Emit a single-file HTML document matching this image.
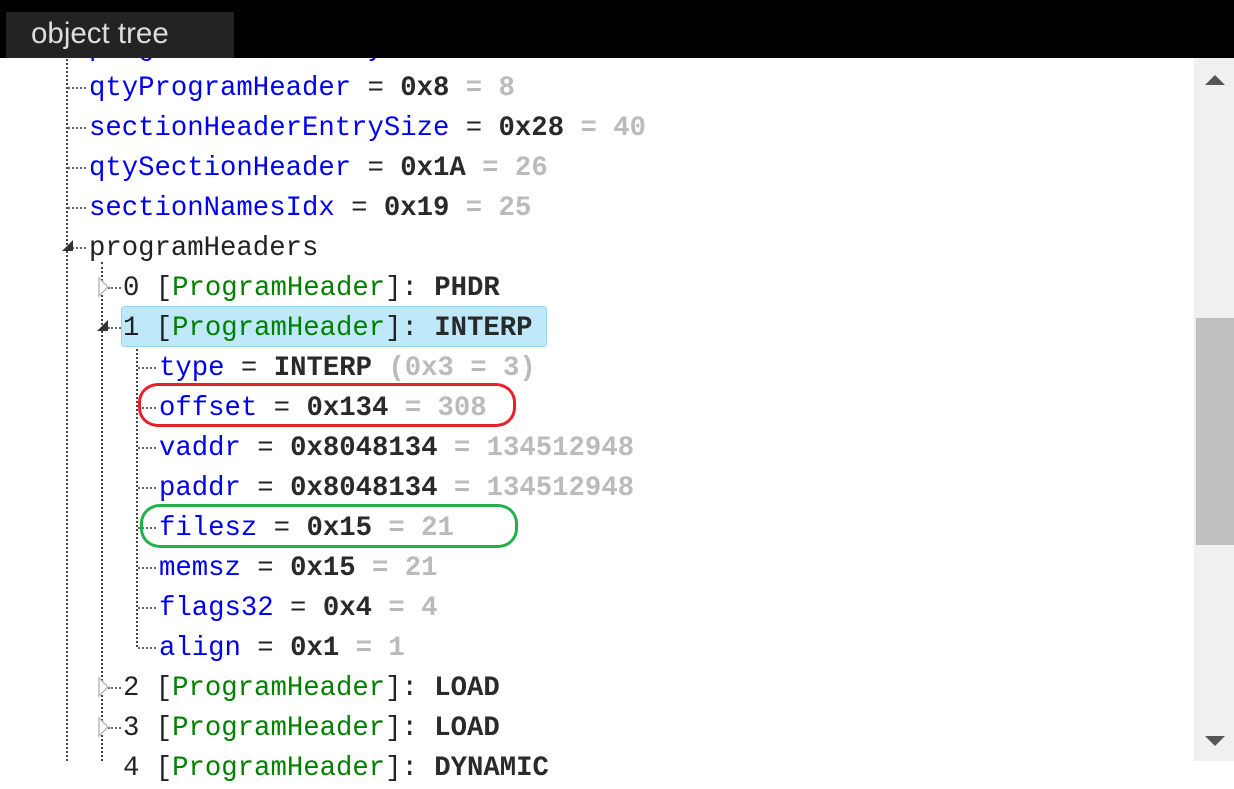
<!DOCTYPE html>
<html><head><meta charset="utf-8"><style>
body{margin:0;width:1234px;height:761px;overflow:hidden;background:#fff;position:relative;font-family:"Liberation Mono",monospace;}
.r{position:absolute;height:40px;line-height:40px;font-size:27.3px;white-space:pre;color:#222;margin-top:2px}
.k{color:#0000f0}.b{font-weight:bold;color:#2a2a2a}.g{color:#bbb;font-weight:bold}.gr{color:#008000}
.v{position:absolute;width:0;border-left:2px dotted #444;}
.h{position:absolute;height:0;border-top:2px dotted #666;}
</style></head><body>
<div class="v" style="left:66px;top:40px;height:721px"></div>
<div class="v" style="left:101px;top:262px;height:499px"></div>
<div class="v" style="left:136px;top:342px;height:305px"></div>
<div class="h" style="left:68px;top:87px;width:18px"></div>
<div class="h" style="left:68px;top:127px;width:18px"></div>
<div class="h" style="left:68px;top:167px;width:18px"></div>
<div class="h" style="left:68px;top:207px;width:18px"></div>
<div class="h" style="left:72px;top:247px;width:14px"></div>
<div class="h" style="left:108px;top:287px;width:13px"></div>
<div class="h" style="left:108px;top:327px;width:13px"></div>
<div class="h" style="left:138px;top:367px;width:18px"></div>
<div class="h" style="left:138px;top:407px;width:18px"></div>
<div class="h" style="left:138px;top:447px;width:18px"></div>
<div class="h" style="left:138px;top:487px;width:18px"></div>
<div class="h" style="left:138px;top:527px;width:18px"></div>
<div class="h" style="left:138px;top:567px;width:18px"></div>
<div class="h" style="left:138px;top:607px;width:18px"></div>
<div class="h" style="left:138px;top:647px;width:18px"></div>
<div class="h" style="left:108px;top:687px;width:13px"></div>
<div class="h" style="left:108px;top:727px;width:13px"></div>
<svg style="position:absolute;left:58px;top:236px" width="20" height="20"><polygon points="4,15 15,15 15,4" fill="#333"/></svg>
<svg style="position:absolute;left:93px;top:316px" width="20" height="20"><polygon points="4,15 15,15 15,4" fill="#333"/></svg>
<svg style="position:absolute;left:96px;top:276px" width="20" height="22"><polygon points="3,2 3,20 12,11" fill="#fff" stroke="#bbb" stroke-width="1.5"/></svg>
<svg style="position:absolute;left:96px;top:676px" width="20" height="22"><polygon points="3,2 3,20 12,11" fill="#fff" stroke="#bbb" stroke-width="1.5"/></svg>
<svg style="position:absolute;left:96px;top:716px" width="20" height="22"><polygon points="3,2 3,20 12,11" fill="#fff" stroke="#bbb" stroke-width="1.5"/></svg>
<div style="position:absolute;left:121px;top:306px;width:424px;height:39px;background:#bfe8fb;border:1px solid #9fd4f0;border-radius:3px"></div>
<div class="r" style="left:89px;top:27px"><span class="k">programHeaderEntrySize</span> = <span class="b">0x20</span> <span class="g">= 32</span></div>
<div class="r" style="left:89px;top:67px"><span class="k">qtyProgramHeader</span> = <span class="b">0x8</span> <span class="g">= 8</span></div>
<div class="r" style="left:89px;top:107px"><span class="k">sectionHeaderEntrySize</span> = <span class="b">0x28</span> <span class="g">= 40</span></div>
<div class="r" style="left:89px;top:147px"><span class="k">qtySectionHeader</span> = <span class="b">0x1A</span> <span class="g">= 26</span></div>
<div class="r" style="left:89px;top:187px"><span class="k">sectionNamesIdx</span> = <span class="b">0x19</span> <span class="g">= 25</span></div>
<div class="r" style="left:89px;top:227px">programHeaders</div>
<div class="r" style="left:123px;top:267px">0 [<span class="gr">ProgramHeader</span>]: <span class="b">PHDR</span></div>
<div class="r" style="left:123px;top:307px">1 [<span class="gr">ProgramHeader</span>]: <span class="b">INTERP</span></div>
<div class="r" style="left:159px;top:347px"><span class="k">type</span> = <span class="b">INTERP</span> <span class="g">(0x3 = 3)</span></div>
<div class="r" style="left:159px;top:387px"><span class="k">offset</span> = <span class="b">0x134</span> <span class="g">= 308</span></div>
<div class="r" style="left:159px;top:427px"><span class="k">vaddr</span> = <span class="b">0x8048134</span> <span class="g">= 134512948</span></div>
<div class="r" style="left:159px;top:467px"><span class="k">paddr</span> = <span class="b">0x8048134</span> <span class="g">= 134512948</span></div>
<div class="r" style="left:159px;top:507px"><span class="k">filesz</span> = <span class="b">0x15</span> <span class="g">= 21</span></div>
<div class="r" style="left:159px;top:547px"><span class="k">memsz</span> = <span class="b">0x15</span> <span class="g">= 21</span></div>
<div class="r" style="left:159px;top:587px"><span class="k">flags32</span> = <span class="b">0x4</span> <span class="g">= 4</span></div>
<div class="r" style="left:159px;top:627px"><span class="k">align</span> = <span class="b">0x1</span> <span class="g">= 1</span></div>
<div class="r" style="left:123px;top:667px">2 [<span class="gr">ProgramHeader</span>]: <span class="b">LOAD</span></div>
<div class="r" style="left:123px;top:707px">3 [<span class="gr">ProgramHeader</span>]: <span class="b">LOAD</span></div>
<div class="r" style="left:123px;top:747px">4 [<span class="gr">ProgramHeader</span>]: <span class="b">DYNAMIC</span></div>
<div style="position:absolute;left:138px;top:383px;width:372px;height:38px;border:3px solid #e8202a;border-radius:20px/19px"></div>
<div style="position:absolute;left:140px;top:504px;width:372px;height:38px;border:3px solid #22b04a;border-radius:20px/19px"></div>
<div style="position:absolute;left:1194px;top:58px;width:40px;height:703px;background:#f0f0f0"></div>
<div style="position:absolute;left:1196px;top:318px;width:38px;height:227px;background:#c0c0c0"></div>
<svg style="position:absolute;left:1203px;top:72px" width="24" height="16"><polygon points="2,13 12,3 22,13" fill="#555"/></svg>
<svg style="position:absolute;left:1203px;top:734px" width="24" height="14"><polygon points="2,2 12,12 22,2" fill="#555"/></svg>
<div style="position:absolute;left:0;top:0;width:1234px;height:58px;background:#000"></div>
<div style="position:absolute;left:6px;top:12px;width:228px;height:46px;background:#232323;color:#ddd;font-family:'Liberation Sans',sans-serif;font-size:29.5px;line-height:44px;padding-left:25px;box-sizing:border-box">object tree</div>
</body></html>
